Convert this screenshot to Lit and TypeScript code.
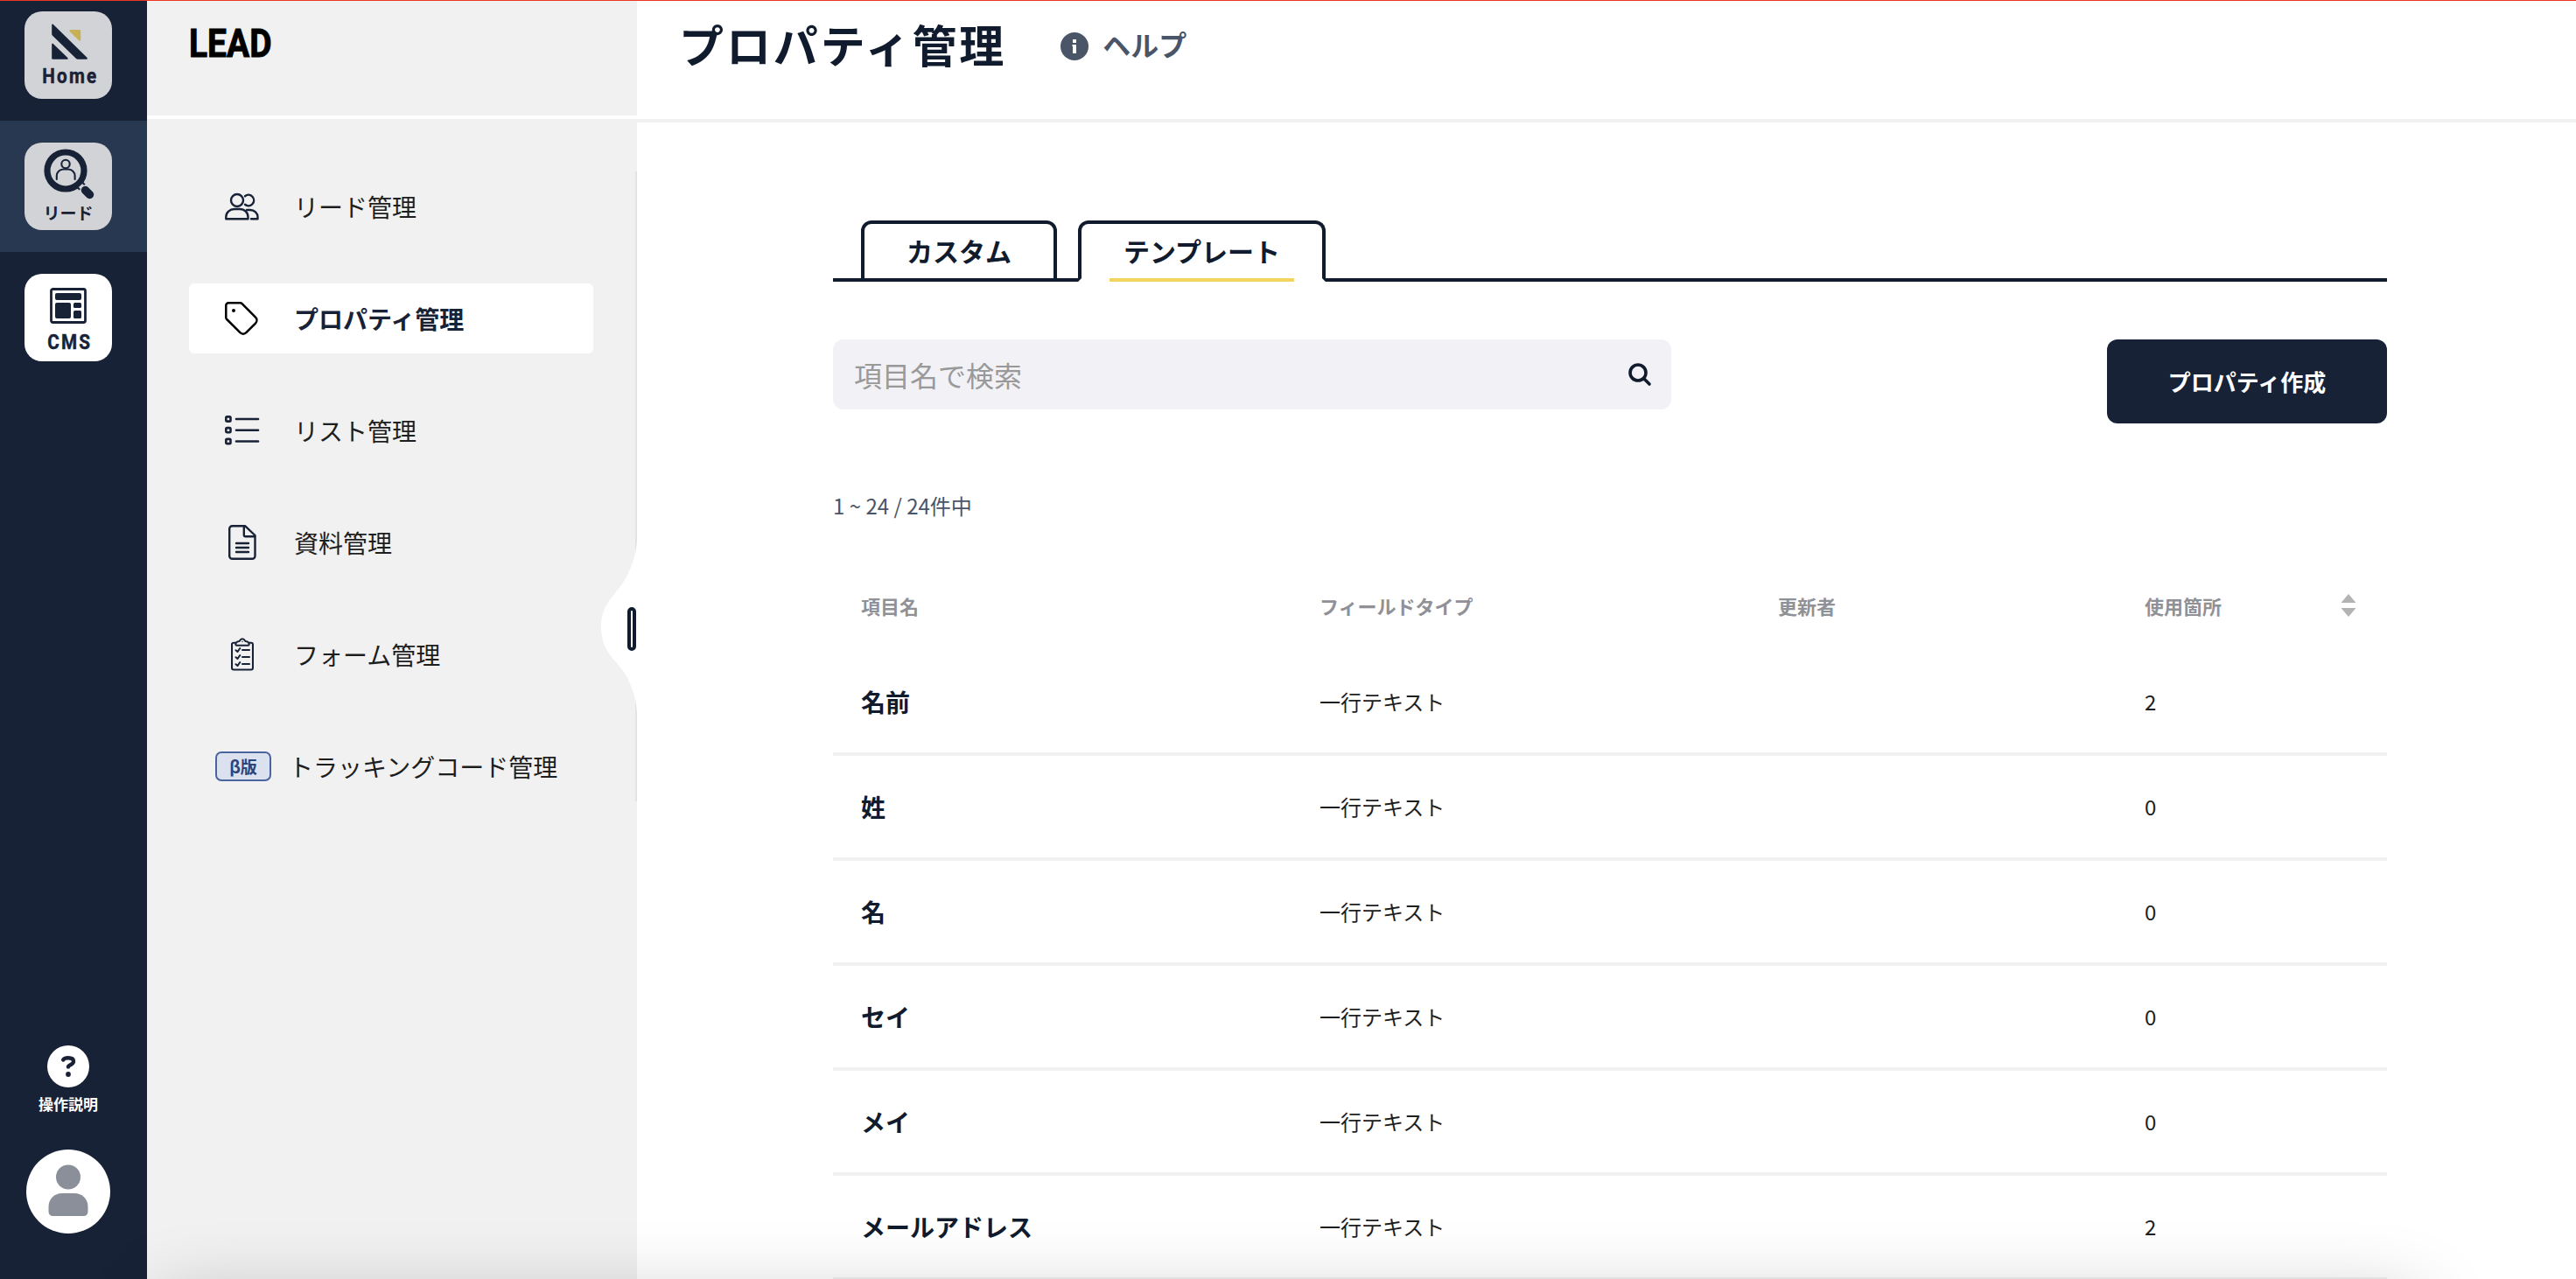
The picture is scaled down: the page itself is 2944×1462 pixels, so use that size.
import { LitElement, html, css, svg } from "lit";
import { customElement } from "lit/decorators.js";
import { classMap } from "lit/directives/class-map.js";

const ink = "#182237";

const icons = {
  people: svg`<svg width="40" height="32" viewBox="0 0 40 32" fill="none" stroke=${ink} stroke-width="2.4" stroke-linejoin="round" stroke-linecap="round">
    <circle cx="14" cy="9" r="7"/>
    <path d="M1.3 30.2 V28.2 C1.3 23 5.500 19 11 19 H17 C22.500 19 26.500 23 26.500 28.2 V30.2 Z"/>
    <path d="M23 4.2 A6.2 6.2 0 1 1 23 13.8 M25 20 H29 C33.700 20 37.500 23.600 37.500 28.2 V30.2 H30"/></svg>`,
  tag: svg`<svg width="38" height="38" viewBox="0 0 38 38" fill="none" stroke="#000" stroke-width="2.5" stroke-linejoin="round">
    <path d="M4 1.300h13.500a3 3 0 0 1 2.100.900L35 17.600a5 5 0 0 1 0 7l-10.600 10.600a5 5 0 0 1-7 0L2.200 20a3 3 0 0 1-.900-2.100V4A2.700 2.700 0 0 1 4 1.300z"/>
    <circle cx="10" cy="10" r="2" fill="#000" stroke="none"/></svg>`,
  list: svg`<svg width="40" height="34" viewBox="0 0 40 34" fill="none" stroke=${ink} stroke-width="2.600" stroke-linecap="round">
    ${[4, 16.7, 29.5].map(
      (y) => svg`<rect x="1.300" y=${y - 2.6} width="5.200" height="5.200" rx="1.200"/><path d=${`M13 ${y}H38`}/>`
    )}</svg>`,
  doc: svg`<svg width="32" height="40" viewBox="0 0 32 40" fill="none" stroke=${ink} stroke-width="2.400" stroke-linejoin="round" stroke-linecap="round">
    <path d="M4.500 1.200H19L30.500 12V35.500a3.300 3.300 0 0 1-3.300 3.300H4.500a3.300 3.300 0 0 1-3.300-3.300V4.500a3.300 3.300 0 0 1 3.300-3.300z"/>
    <path d="M17.800 1.500V11.500a1.800 1.800 0 0 0 1.800 1.800h10.500M9 21h14M9 26h14M9 31h14"/></svg>`,
  form: svg`<svg width="26" height="38" viewBox="0 0 26 38" fill="none" stroke=${ink} stroke-width="2.100" stroke-linejoin="round" stroke-linecap="round">
    <path d="M5 5.700H3A2 2 0 0 0 1 7.700V34.500a2 2 0 0 0 2 2h20a2 2 0 0 0 2-2V7.700a2 2 0 0 0-2-2h-2"/>
    <path d="M5.300 7.500c0-2 1.500-3.200 4.200-3.500 1.300-2 2-2.800 3.500-2.800s2.200.800 3.500 2.800c2.700.300 4.200 1.500 4.200 3.500 0 .900-.400 1.300-1.300 1.300H6.600c-.900 0-1.300-.400-1.300-1.300z"/>
    <circle cx="13" cy="4.500" r=".7" fill=${ink} stroke="none"/>
    ${[14, 22, 30].map((y) => svg`<path d=${`M5.500 ${y + 0.3}l2 1.700 2.800-4M13 ${y}h8`}/>`)}</svg>`,
};

interface MenuItem {
  icon?: keyof typeof icons;
  label: string;
  active?: boolean;
}

const menu: MenuItem[] = [
  { icon: "people", label: "リード管理" },
  { icon: "tag", label: "プロパティ管理", active: true },
  { icon: "list", label: "リスト管理" },
  { icon: "doc", label: "資料管理" },
  { icon: "form", label: "フォーム管理" },
  { label: "トラッキングコード管理" },
];

const rows: [string, string, number][] = [
  ["名前", "一行テキスト", 2],
  ["姓", "一行テキスト", 0],
  ["名", "一行テキスト", 0],
  ["セイ", "一行テキスト", 0],
  ["メイ", "一行テキスト", 0],
  ["メールアドレス", "一行テキスト", 2],
];

@customElement("app-rail")
class AppRail extends LitElement {
  static styles = css`
    :host {
      display: flex;
      flex-direction: column;
      width: 168px;
      flex: none;
      background: #182237;
      color: #fff;
    }
    .items {
      margin-top: -12px;
      flex: 1;
    }
    .item {
      height: 150px;
      box-sizing: border-box;
      padding: 25px 28px;
    }
    .item.active {
      background: #293851;
    }
    .tile {
      display: flex;
      flex-direction: column;
      align-items: center;
      width: 100px;
      height: 100px;
      border-radius: 20px;
      background: #d2d3d7;
      color: #182237;
      font: 700 24px/28px Roboto, sans-serif;
    }
    .tile.white {
      background: #fff;
    }
    .tile svg {
      display: block;
      flex: none;
    }
    .home {
      margin-top: 12px;
    }
    .latin {
      letter-spacing: 2.6px;
      margin: 4px -4px 0 0;
      transform: scaleX(0.86);
      -webkit-text-stroke: 0.5px #182237;
    }
    .cms {
      margin-top: 16px;
    }
    .cms + .latin {
      margin-top: 6px;
    }
    .lead {
      margin-top: 6px;
    }
    .kana {
      font: 700 19px/26px "Noto Sans CJK JP", sans-serif;
      margin-top: 1px;
    }
    .bottom {
      display: flex;
      flex-direction: column;
      align-items: center;
      padding: 0 12px 52px 0;
    }
    .help {
      font: 700 17px/24px "Noto Sans CJK JP", sans-serif;
      margin: 7px 0 40px;
    }
    .bottom svg {
      display: block;
    }
  `;
  render() {
    return html`
      <div class="items">
        <div class="item">
          <div class="tile">
            <svg class="home" width="44" height="44" viewBox="0 0 44 44" fill=${ink}>
              <path d="M3.200 3.500c0-1 .8-1.400 1.500-.7l38.700 38c.900.900.5 2-.8 2h-9.600c-.8 0-1.400-.2-2-.8L3.800 15.500c-.400-.400-.600-.800-.600-1.400z"/>
              <path d="M3.200 26c0-1.200.9-1.600 1.800-.8l16 15.500c1.200 1.200.8 2.100-.7 2.100H4.400c-.8 0-1.200-.4-1.200-1.200z"/>
              <path fill="#c8b057" d="M25 9h9.500c1.200 0 1.700.5 1.700 1.700v9.500c0 1.500-1 2-2 1L24 11.300C22.800 10 23.200 9 25 9z"/>
            </svg>
            <span class="latin">Home</span>
          </div>
        </div>
        <div class="item active">
          <div class="tile">
            <svg class="lead" width="60" height="60" viewBox="0 0 60 60" fill="none" stroke=${ink}>
              <circle cx="27" cy="26" r="21" stroke-width="7.200"/>
              <g stroke-width="2.100" stroke-linecap="round">
                <circle cx="27" cy="18.500" r="4.700"/>
                <path d="M16.800 36v-4a7.500 7.500 0 0 1 7.500-7.500h5.800a7.500 7.500 0 0 1 7.500 7.500v4"/>
              </g>
              <path d="M42 41l4 4" stroke-width="10"/>
              <path d="M44 43l3 3" stroke="#d2d3d7" stroke-width="6"/>
              <path d="M49.500 48.500l5 5" stroke-width="9.500" stroke-linecap="round"/>
            </svg>
            <span class="kana">リード</span>
          </div>
        </div>
        <div class="item">
          <div class="tile white">
            <svg class="cms" width="42" height="42" viewBox="0 0 42 42" fill=${ink}>
              <rect x="1.500" y="1.500" width="39" height="38" rx="2" fill="none" stroke=${ink} stroke-width="2.800"/>
              <rect x="6" y="6" width="30" height="8" rx="2"/>
              <rect x="6" y="17" width="18" height="18" rx="2"/>
              <rect x="27" y="17" width="9" height="6" rx="1.500"/>
              <rect x="27" y="26" width="9" height="9" rx="1.500"/>
            </svg>
            <span class="latin">CMS</span>
          </div>
        </div>
      </div>
      <div class="bottom">
        <svg width="48" height="48" viewBox="0 0 48 48">
          <circle cx="24" cy="24" r="24" fill="#fff"/>
          <path d="M18.200 16.500c.8-1.700 3-2.300 5.800-2.300 3.700 0 6 1.300 6 4 0 4-6 3.800-6 6.300" fill="none" stroke="#182136" stroke-width="4.400" stroke-linecap="round"/>
          <circle cx="24" cy="33" r="2.900" fill="#182136"/>
        </svg>
        <span class="help">操作説明</span>
        <svg width="96" height="96" viewBox="0 0 96 96">
          <circle cx="48" cy="48" r="48" fill="#fff"/>
          <circle cx="48" cy="31.500" r="14" fill="#8b8f99"/>
          <path d="M25.500 65.500c0-9 6.500-15.500 15.500-15.500h14c9 0 15.500 6.500 15.500 15.500V70c0 4-1.800 6-5.500 6H31c-3.700 0-5.500-2-5.500-6z" fill="#8b8f99"/>
        </svg>
      </div>
    `;
  }
}

@customElement("app-menu")
class AppMenu extends LitElement {
  static styles = css`
    :host {
      display: flex;
      flex-direction: column;
      position: relative;
      width: 560px;
      flex: none;
      background: #f1f1f1;
      color: #1e1e1e;
      font: 400 28px/40px "Noto Sans CJK JP", sans-serif;
    }
    .brand {
      height: 132px;
      border-bottom: 4px solid #fff;
      box-sizing: content-box;
    }
    .brand span {
      display: block;
      color: #000;
      font: 700 44px/52px Roboto, sans-serif;
      padding: 24px 0 0 48px;
      transform: scaleX(0.885);
      transform-origin: 48px 0;
      -webkit-text-stroke: 1px #000;
    }
    .nav {
      display: flex;
      flex-direction: column;
      gap: 48px;
      padding: 0 48px;
      margin-top: 60px;
      height: 720px;
      border-right: 2px solid #e3e3e3;
      box-sizing: border-box;
    }
    .item {
      display: flex;
      align-items: center;
      height: 80px;
      border-radius: 6px;
      box-sizing: border-box;
      width: 462px;
      flex: none;
    }
    .item.active {
      background: #fff;
      color: #182237;
      font-weight: 700;
    }
    .icon {
      width: 40px;
      margin: 0 39px 0 41px;
      display: flex;
      justify-content: center;
    }
    .item.active .icon {
      justify-content: flex-start;
    }
    .beta {
      box-sizing: border-box;
      width: 64px;
      height: 34px;
      margin: 0 20px 0 30px;
      border: 2px solid #4a64a0;
      border-radius: 7px;
      background: #dbe1ef;
      color: #2d4478;
      font: 700 19px/29px "Noto Sans CJK JP", sans-serif;
      text-align: center;
    }
    .handle {
      position: absolute;
      left: 518px;
      top: 618px;
    }
  `;
  render() {
    return html`
      <div class="brand"><span>LEAD</span></div>
      <div class="nav">
        ${menu.map(
          (m) => html`<div class=${classMap({ item: true, active: !!m.active })}>
            ${m.icon ? html`<span class="icon">${icons[m.icon]}</span>` : html`<span class="beta">β版</span>`}
            <span>${m.label}</span>
          </div>`
        )}
      </div>
      <svg class="handle" width="42" height="198" viewBox="0 0 42 198">
        <path fill="#fff" d="M42 0C41 18 34 35 27 46.500C20 57 13 64 8 72C3 80 1 89 1 98C1 108 3 117 8 126C13 134 20 141 27 150C34 161 41 178 42 196z"/>
        <rect x="33" y="78" width="6" height="46" rx="3" fill="none" stroke="#0f1b2e" stroke-width="4"/>
      </svg>
    `;
  }
}

@customElement("property-table")
class PropertyTable extends LitElement {
  static styles = css`
    :host {
      display: block;
      font: 400 24px/36px "Noto Sans CJK JP", sans-serif;
      color: #1e1e1e;
    }
    .row {
      display: grid;
      grid-template-columns: 524px 524px 419px 309px;
      align-items: center;
      height: 116px;
      border-bottom: 4px solid #f1f1f1;
    }
    .row > div {
      padding: 0 32px;
    }
    .head {
      height: 96px;
      padding-bottom: 4px;
      border: 0;
      font: 700 22px/32px "Noto Sans CJK JP", sans-serif;
      color: #909197;
    }
    .sort {
      display: flex;
      justify-content: space-between;
      align-items: center;
    }
    .name {
      font-size: 28px;
      font-weight: 700;
      color: #101b2d;
    }
    .sort svg {
      margin-right: 3px;
    }
  `;
  render() {
    return html`
      <div class="row head">
        <div>項目名</div>
        <div>フィールドタイプ</div>
        <div>更新者</div>
        <div class="sort">
          使用箇所<svg width="18" height="26" viewBox="0 0 18 26" fill="#b3b3b3"><path d="M9 0l8.500 10H.5zM9 26L.5 16h17z"/></svg>
        </div>
      </div>
      ${rows.map(
        ([name, type, used]) => html`<div class="row">
          <div class="name">${name}</div>
          <div>${type}</div>
          <div></div>
          <div>${used}</div>
        </div>`
      )}
    `;
  }
}

@customElement("app-root")
class AppRoot extends LitElement {
  static styles = css`
    :host {
      display: flex;
      position: relative;
      width: 2944px;
      height: 1462px;
      overflow: hidden;
      background: #fff;
      color: #101b2d;
      font-family: "Noto Sans CJK JP", sans-serif;
    }
    main {
      flex: 1;
      min-width: 0;
    }
    header {
      display: flex;
      align-items: center;
      box-sizing: border-box;
      height: 140px;
      padding: 0 0 36px 48px;
      border-bottom: 4px solid #f1f1f1;
    }
    h1 {
      margin: 0 62px 0 0;
      font-size: 51px;
      line-height: 72px;
      font-weight: 700;
      letter-spacing: 2.9px;
    }
    .help {
      display: flex;
      align-items: center;
      gap: 16px;
      padding-top: 6px;
      font-size: 32px;
      line-height: 40px;
      font-weight: 700;
      color: #4a5568;
    }
    .help span {
      margin-top: -6px;
    }
    .page {
      padding: 112px 216px 0 224px;
    }
    .tabs {
      display: flex;
      gap: 24px;
      height: 66px;
      padding-left: 32px;
      border-bottom: 4px solid #101b2d;
    }
    .tab {
      box-sizing: border-box;
      height: 70px;
      padding: 0 48px;
      border: 4px solid #101b2d;
      border-radius: 12px 12px 0 0;
      font-size: 30px;
      line-height: 61px;
      font-weight: 700;
    }
    .tab.active {
      position: relative;
      border-bottom-color: #fff;
    }
    .tab.active::after {
      content: "";
      position: absolute;
      left: 32px;
      right: 32px;
      bottom: -4px;
      height: 4px;
      background: #f4d35e;
    }
    .tools {
      display: flex;
      justify-content: space-between;
      margin-top: 66px;
    }
    .search {
      display: flex;
      align-items: center;
      justify-content: space-between;
      box-sizing: border-box;
      width: 958px;
      height: 80px;
      padding: 0 22px 0 24px;
      border-radius: 12px;
      background: #f1f1f6;
      color: #999;
      font-size: 32px;
    }
    .create {
      width: 320px;
      height: 96px;
      border-radius: 12px;
      background: #182237;
      color: #fff;
      font-size: 26px;
      line-height: 96px;
      font-weight: 700;
      text-align: center;
    }
    .count {
      margin: 76px 0 48px;
      font-size: 24px;
      line-height: 36px;
      color: #4a5568;
    }
    .topline {
      position: absolute;
      inset: 0 0 auto;
      height: 1px;
      background: #ee3524;
    }
    .shade {
      position: absolute;
      left: 180px;
      right: 180px;
      top: 1482px;
      height: 100px;
      box-shadow: 0 0 84px rgba(0, 0, 0, 0.22);
    }
  `;
  render() {
    return html`
      <app-rail></app-rail>
      <app-menu></app-menu>
      <main>
        <header>
          <h1>プロパティ管理</h1>
          <div class="help">
            <svg width="32" height="32" viewBox="0 0 32 32">
              <circle cx="16" cy="16" r="16" fill="#4a5568"/>
              <path fill="#fff" d="M14 8h4v4h-4zM13.500 14h4.500v10h-4v-8h-.5z"/>
            </svg>
            <span>ヘルプ</span>
          </div>
        </header>
        <div class="page">
          <div class="tabs">
            <div class="tab">カスタム</div>
            <div class="tab active">テンプレート</div>
          </div>
          <div class="tools">
            <div class="search">
              <span>項目名で検索</span>
              <svg width="28" height="28" viewBox="0 0 28 28" fill="none" stroke="#101b2d" stroke-width="3.600" stroke-linecap="round">
                <circle cx="12" cy="12" r="9"/><path d="M19 19l6 6"/>
              </svg>
            </div>
            <div class="create">プロパティ作成</div>
          </div>
          <div class="count">1 ~ 24 / 24件中</div>
          <property-table></property-table>
        </div>
      </main>
      <div class="shade"></div>
      <div class="topline"></div>
    `;
  }
}
